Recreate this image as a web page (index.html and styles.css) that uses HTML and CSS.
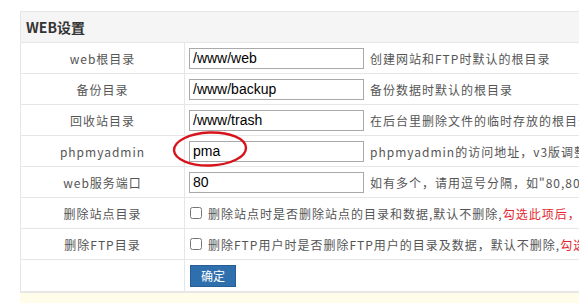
FILE: index.html
```html
<!DOCTYPE html>
<html lang="zh-CN">
<head>
    <meta charset="UTF-8">
    <meta name="viewport" content="width=device-width, initial-scale=1.0">
    <title>WEB设置</title>
    <link rel="stylesheet" href="styles.css">
</head>
<body>
    <div class="panel">
        <table class="settings">
            <tr class="head">
                <th colspan="2">WEB设置</th>
            </tr>
            <tr>
                <td class="label">web根目录</td>
                <td><input type="text" value="/www/web"><span class="tip">创建网站和FTP时默认的根目录</span></td>
            </tr>
            <tr>
                <td class="label">备份目录</td>
                <td><input type="text" value="/www/backup"><span class="tip">备份数据时默认的根目录</span></td>
            </tr>
            <tr>
                <td class="label">回收站目录</td>
                <td><input type="text" value="/www/trash"><span class="tip">在后台里删除文件的临时存放的根目录</span></td>
            </tr>
            <tr>
                <td class="label">phpmyadmin</td>
                <td>
                    <span class="marked">
                        <input type="text" value="pma">
                        <svg class="circle" width="80" height="40" viewBox="0 0 80 40">
                            <ellipse cx="39" cy="19" rx="36" ry="16.5" transform="rotate(-2 39 19)" fill="none" stroke="#d7141c" stroke-width="2.4"/>
                        </svg>
                    </span><span class="tip">phpmyadmin的访问地址，v3版调整为随机地址</span>
                </td>
            </tr>
            <tr>
                <td class="label">web服务端口</td>
                <td><input type="text" value="80"><span class="tip">如有多个，请用逗号分隔，如"80,8080"</span></td>
            </tr>
            <tr>
                <td class="label">删除站点目录</td>
                <td><label class="check"><input type="checkbox">删除站点时是否删除站点的目录和数据,默认不删除,<em>勾选此项后，将同时删除站点目录</em></label></td>
            </tr>
            <tr>
                <td class="label">删除FTP目录</td>
                <td><label class="check"><input type="checkbox">删除FTP用户时是否删除FTP用户的目录及数据，默认不删除,<em>勾选此项后，将同时删除FTP目录</em></label></td>
            </tr>
            <tr class="actions">
                <td></td>
                <td><button>确定</button></td>
            </tr>
        </table>
        <div class="notice"></div>
    </div>
</body>
</html>
```

FILE: styles.css
```css
body {
    margin: 0;
    padding: 11px 0 0 20px;
    background: #fff;
    font-family: "Noto Sans CJK SC", "Noto Sans", sans-serif;
    font-size: 12px;
    color: #555;
    overflow: hidden;
}

.panel {
    width: 1000px;
}

.settings {
    width: 100%;
    border-collapse: collapse;
    border: 1px solid #e3e3e3;
}

.settings th,
.settings td {
    border: 1px solid #e6e6e6;
    height: 30px;
    padding: 0 4px;
    white-space: nowrap;
    letter-spacing: 1px;
}

.head th {
    background: #f5f5f5;
    text-align: left;
    padding-left: 5px;
    font-size: 14px;
    font-weight: bold;
    color: #333;
    letter-spacing: 0;
}

.label {
    width: 155px;
    text-align: center;
}

input[type="text"] {
    width: 167px;
    height: 19px;
    padding: 0 3px;
    margin: 0;
    border: 1px solid #a9a9a9;
    font-family: "Liberation Sans", Arial, sans-serif;
    font-size: 14px;
    color: #000;
    vertical-align: middle;
    box-sizing: content-box;
}

.tip {
    margin-left: 6px;
    vertical-align: middle;
}

.marked {
    position: relative;
    display: inline-block;
    vertical-align: middle;
}

.circle {
    position: absolute;
    left: -18px;
    top: -10px;
}

.check {
    display: flex;
    align-items: center;
}

.check input {
    width: 12px;
    height: 12px;
    margin: 0 6px 0 1px;
}

.check em {
    font-style: normal;
    color: #e2262e;
}

.actions td {
    height: 31px;
}

button {
    font-family: "Noto Sans CJK SC", sans-serif;
    font-size: 12px;
    color: #fff;
    background: #2f6fae;
    border: 1px solid #285e94;
    padding: 0;
    width: 46px;
    height: 22px;
    margin-left: 1px;
    cursor: pointer;
}

.notice {
    height: 20px;
    background: #fffdea;
    border-top: 1px solid #e8e8e8;
}
```
